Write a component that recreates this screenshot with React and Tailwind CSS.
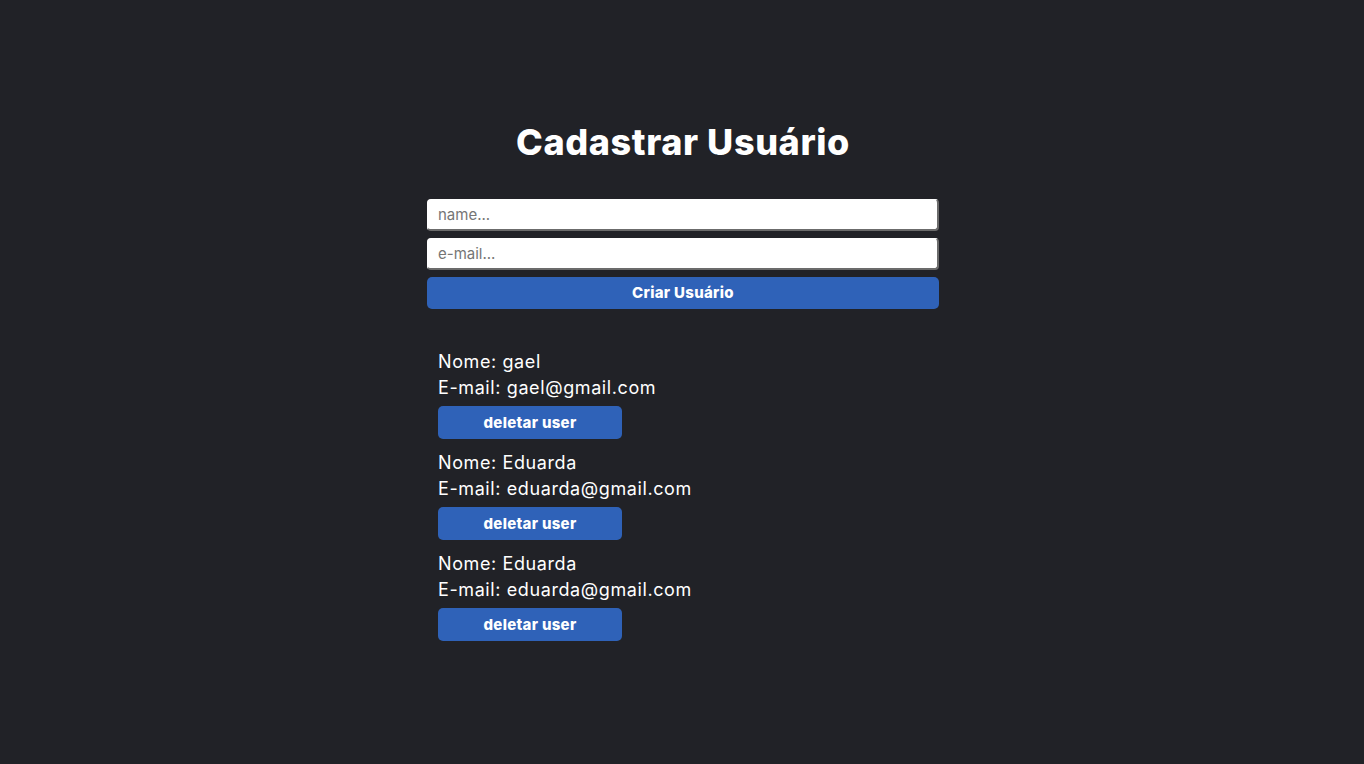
import React, { useState } from 'react';

function App() {
  const [users, setUsers] = useState([
    { id: 1, name: 'gael', email: 'gael@gmail.com' },
    { id: 2, name: 'Eduarda', email: 'eduarda@gmail.com' },
    { id: 3, name: 'Eduarda', email: 'eduarda@gmail.com' },
  ]);
  const [name, setName] = useState('');
  const [email, setEmail] = useState('');

  const criar = () => {
    if (!name || !email) return;
    setUsers([...users, { id: Date.now(), name, email }]);
    setName('');
    setEmail('');
  };

  const deletar = (id) => setUsers(users.filter((u) => u.id !== id));

  return (
    <div className="min-h-screen bg-[#212227] text-white font-['Inter',sans-serif]">
      <div className="w-[514px] mx-auto pl-[2px] pt-[118px]">
        <h1 className="text-center text-[36px] leading-[48px] font-extrabold tracking-[0.6px]">Cadastrar Usuário</h1>

        <div className="mt-[33px] flex flex-col">
          <input
            value={name}
            onChange={(e) => setName(e.target.value)}
            placeholder="name..."
            className="h-[32px] bg-white text-black rounded-[4px] px-[10px] text-[15px] placeholder:text-[#757575] border border-white border-b-2 border-r-2 border-b-[#6b6b6b] border-r-[#6b6b6b] outline-none"
          />
          <input
            value={email}
            onChange={(e) => setEmail(e.target.value)}
            placeholder="e-mail..."
            className="mt-[7px] h-[32px] bg-white text-black rounded-[4px] px-[10px] text-[15px] placeholder:text-[#757575] border border-white border-b-2 border-r-2 border-b-[#6b6b6b] border-r-[#6b6b6b] outline-none"
          />
          <button
            onClick={criar}
            className="mt-[7px] h-[32px] bg-[#2f62b8] rounded-[5px] text-[15px] font-extrabold tracking-[0.3px]"
          >
            Criar Usuário
          </button>
        </div>

        <ul className="mt-[40px] pl-[11px] flex flex-col gap-[11px]">
          {users.map((u) => (
            <li key={u.id} className="text-[18px] leading-[26px] tracking-[0.6px]">
              <p>Nome: {u.name}</p>
              <p>E-mail: {u.email}</p>
              <button
                onClick={() => deletar(u.id)}
                className="mt-[5px] w-[184px] h-[33px] bg-[#2f62b8] rounded-[5px] text-[15px] font-extrabold tracking-[0.3px]"
              >
                deletar user
              </button>
            </li>
          ))}
        </ul>
      </div>
    </div>
  );
}

export default App;
